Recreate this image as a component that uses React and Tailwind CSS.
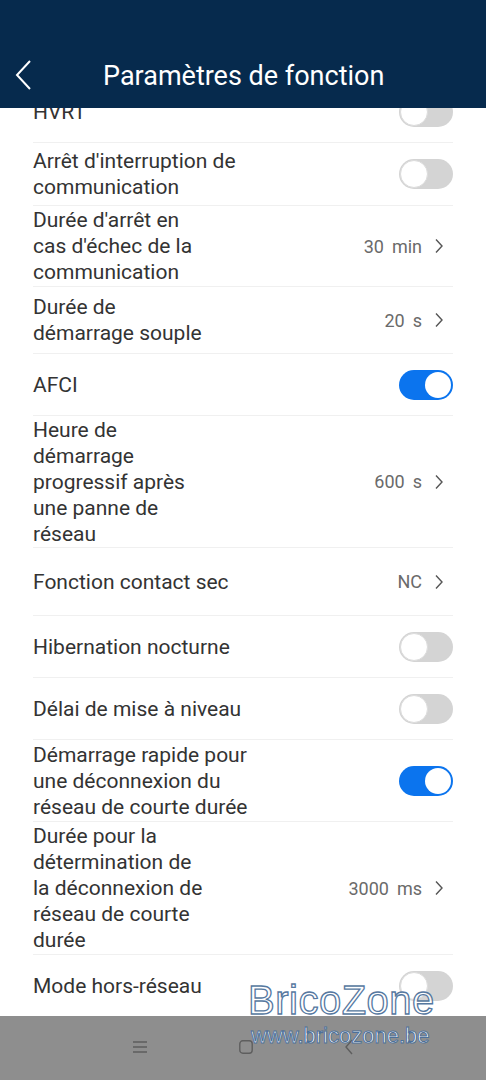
import React from "react";

const rows = [
  { h: 62, lines: ["HVRT"], toggle: false },
  { h: 63, lines: ["Arrêt d'interruption de", "communication"], toggle: false },
  { h: 81, lines: ["Durée d'arrêt en", "cas d'échec de la", "communication"], value: "30", unit: "min" },
  { h: 67, lines: ["Durée de", "démarrage souple"], value: "20", unit: "s" },
  { h: 62, lines: ["AFCI"], toggle: true },
  { h: 132, lines: ["Heure de", "démarrage", "progressif après", "une panne de", "réseau"], value: "600", unit: "s" },
  { h: 68, lines: ["Fonction contact sec"], value: "NC" },
  { h: 62, lines: ["Hibernation nocturne"], toggle: false },
  { h: 62, lines: ["Délai de mise à niveau"], toggle: false },
  { h: 82, lines: ["Démarrage rapide pour", "une déconnexion du", "réseau de courte durée"], toggle: true },
  { h: 133, lines: ["Durée pour la", "détermination de", "la déconnexion de", "réseau de courte", "durée"], value: "3000", unit: "ms" },
  { h: 62, lines: ["Mode hors-réseau"], toggle: false, last: true },
];

function Toggle({ on }) {
  return on ? (
    <div className="w-[54px] h-[30px] rounded-full bg-[#0b74ee] flex items-center justify-end pr-[2px]">
      <div className="w-[26px] h-[26px] rounded-full bg-white" />
    </div>
  ) : (
    <div className="w-[54px] h-[30px] rounded-full bg-[#d4d4d4] flex items-center pl-[1px]">
      <div className="w-[28px] h-[28px] rounded-full bg-white border border-[#dcdcdc]" />
    </div>
  );
}

function Chevron() {
  return (
    <svg width="10" height="16" viewBox="0 0 10 16" className="ml-[12px]">
      <path d="M2 1.5 L8 8 L2 14.5" fill="none" stroke="#555" strokeWidth="1.4" />
    </svg>
  );
}

export default function App() {
  return (
    <div className="w-[486px] h-[1080px] bg-white flex flex-col overflow-hidden relative font-['Roboto',sans-serif]">
      <div className="h-[108px] shrink-0 bg-[#062a4d] relative z-10 flex items-end pb-[15px]">
        <svg width="20" height="32" viewBox="0 0 20 32" className="ml-[13px] mb-[2px]">
          <path d="M17 2 L4 16 L17 30" fill="none" stroke="#fff" strokeWidth="2" />
        </svg>
        <div className="ml-[70px] text-white text-[27px] leading-[34px]">Paramètres de fonction</div>
      </div>
      <div className="flex-1 overflow-hidden">
        <div className="mt-[-27px] px-[33px]">
          {rows.map((r, i) => (
            <div
              key={i}
              style={{ height: r.h }}
              className={`flex items-center justify-between ${r.last ? "" : "border-b border-[#f0f0f0]"}`}
            >
              <div className="text-[21px] leading-[26px] text-[#333333] whitespace-nowrap">
                {r.lines.map((l, j) => (
                  <div key={j}>{l}</div>
                ))}
              </div>
              {r.value !== undefined ? (
                <div className="flex items-center text-[18px] text-[#6a6a6a] mr-[9px]">
                  <span>{r.value}</span>
                  {r.unit && <span className="ml-[8px]">{r.unit}</span>}
                  <Chevron />
                </div>
              ) : (
                <Toggle on={r.toggle} />
              )}
            </div>
          ))}
        </div>
      </div>
      <div className="h-[64px] shrink-0 bg-[#8e8e8e] flex items-center justify-center gap-[92px] pb-[2px]">
        <svg width="14" height="12" viewBox="0 0 14 12">
          <path d="M0 1 H14 M0 6 H14 M0 11 H14" stroke="#5e5e5e" strokeWidth="1.4" />
        </svg>
        <svg width="14" height="14" viewBox="0 0 14 14">
          <rect x="0.8" y="0.8" width="12.4" height="12.4" rx="3" fill="none" stroke="#5e5e5e" strokeWidth="1.4" />
        </svg>
        <svg width="8" height="16" viewBox="0 0 8 16">
          <path d="M7 1 L1 8 L7 15" fill="none" stroke="#5e5e5e" strokeWidth="1.4" />
        </svg>
      </div>
      <div className="absolute left-[248px] top-[978px] z-20 flex flex-col items-start pointer-events-none">
        <div className="text-[40px] leading-[44px] font-['Liberation_Sans',sans-serif] text-white/80 [-webkit-text-stroke:1.3px_#56789f] tracking-[0.5px]">BricoZone</div>
        <div className="mt-[2px] ml-[3px] text-[22px] leading-[24px] font-['Liberation_Sans',sans-serif] text-white [-webkit-text-stroke:1px_#4d7099]">www.bricozone.be</div>
      </div>
    </div>
  );
}
